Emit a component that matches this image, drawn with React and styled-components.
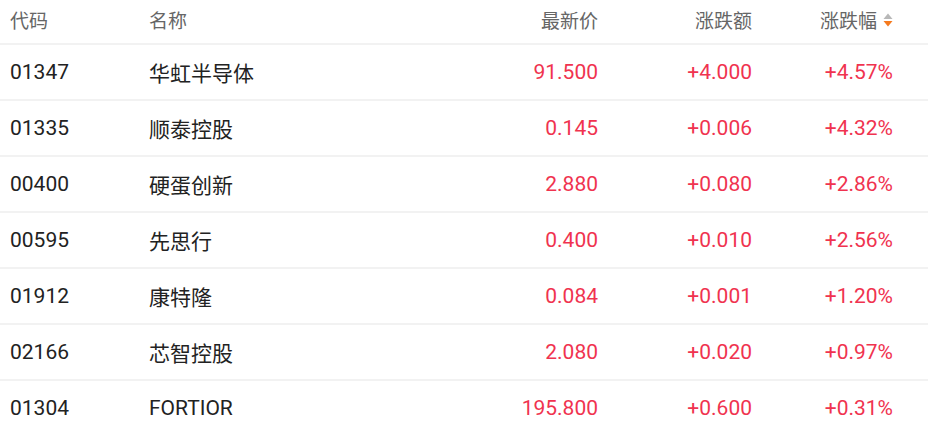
import React from "react";
import styled, { createGlobalStyle } from "styled-components";

const Global = createGlobalStyle`
  html, body { margin: 0; padding: 0; background: #fff; }
  body { font-family: Roboto, "Noto Sans CJK SC", sans-serif; }
`;

const Table = styled.div`
  width: 928px;
  padding: 0 35px 0 10px;
  box-sizing: border-box;
`;

const Row = styled.div`
  display: grid;
  grid-template-columns: 139px 200px 249px 154px 141px;
  align-items: center;
  height: ${(p) => (p.$head ? "39px" : "54px")};
  border-bottom: 2px solid #f2f2f2;
  margin: 0 -35px 0 -10px;
  padding: ${(p) => (p.$head ? "0 35px 4px 10px" : "0 35px 0 10px")};
  box-sizing: content-box;
`;

const Cell = styled.div`
  text-align: ${(p) => (p.$right ? "right" : "left")};
  font-size: ${(p) => (p.$head ? "19px" : "21px")};
  color: ${(p) => (p.$head ? "#666" : p.$red ? "#f0334f" : "#222")};
  white-space: nowrap;
  display: flex;
  align-items: center;
  justify-content: ${(p) => (p.$right ? "flex-end" : "flex-start")};
`;

const SortIcon = styled.svg`
  margin-left: 6px;
  flex: none;
`;

const data = [
  ["01347", "华虹半导体", "91.500", "+4.000", "+4.57%"],
  ["01335", "顺泰控股", "0.145", "+0.006", "+4.32%"],
  ["00400", "硬蛋创新", "2.880", "+0.080", "+2.86%"],
  ["00595", "先思行", "0.400", "+0.010", "+2.56%"],
  ["01912", "康特隆", "0.084", "+0.001", "+1.20%"],
  ["02166", "芯智控股", "2.080", "+0.020", "+0.97%"],
  ["01304", "FORTIOR", "195.800", "+0.600", "+0.31%"],
];

export default function App() {
  return (
    <>
      <Global />
      <Table>
        <Row $head>
          <Cell $head>代码</Cell>
          <Cell $head>名称</Cell>
          <Cell $head $right>最新价</Cell>
          <Cell $head $right>涨跌额</Cell>
          <Cell $head $right>
            涨跌幅
            <SortIcon width="10" height="14" viewBox="0 0 10 14">
              <path d="M5 0.5 L9.5 6 L0.5 6 Z" fill="#b8b8b8" />
              <path d="M0.5 8 L9.5 8 L5 13.5 Z" fill="#f57a1f" />
            </SortIcon>
          </Cell>
        </Row>
        {data.map((r) => (
          <Row key={r[0]}>
            <Cell>{r[0]}</Cell>
            <Cell>{r[1]}</Cell>
            <Cell $right $red>{r[2]}</Cell>
            <Cell $right $red>{r[3]}</Cell>
            <Cell $right $red>{r[4]}</Cell>
          </Row>
        ))}
      </Table>
    </>
  );
}
